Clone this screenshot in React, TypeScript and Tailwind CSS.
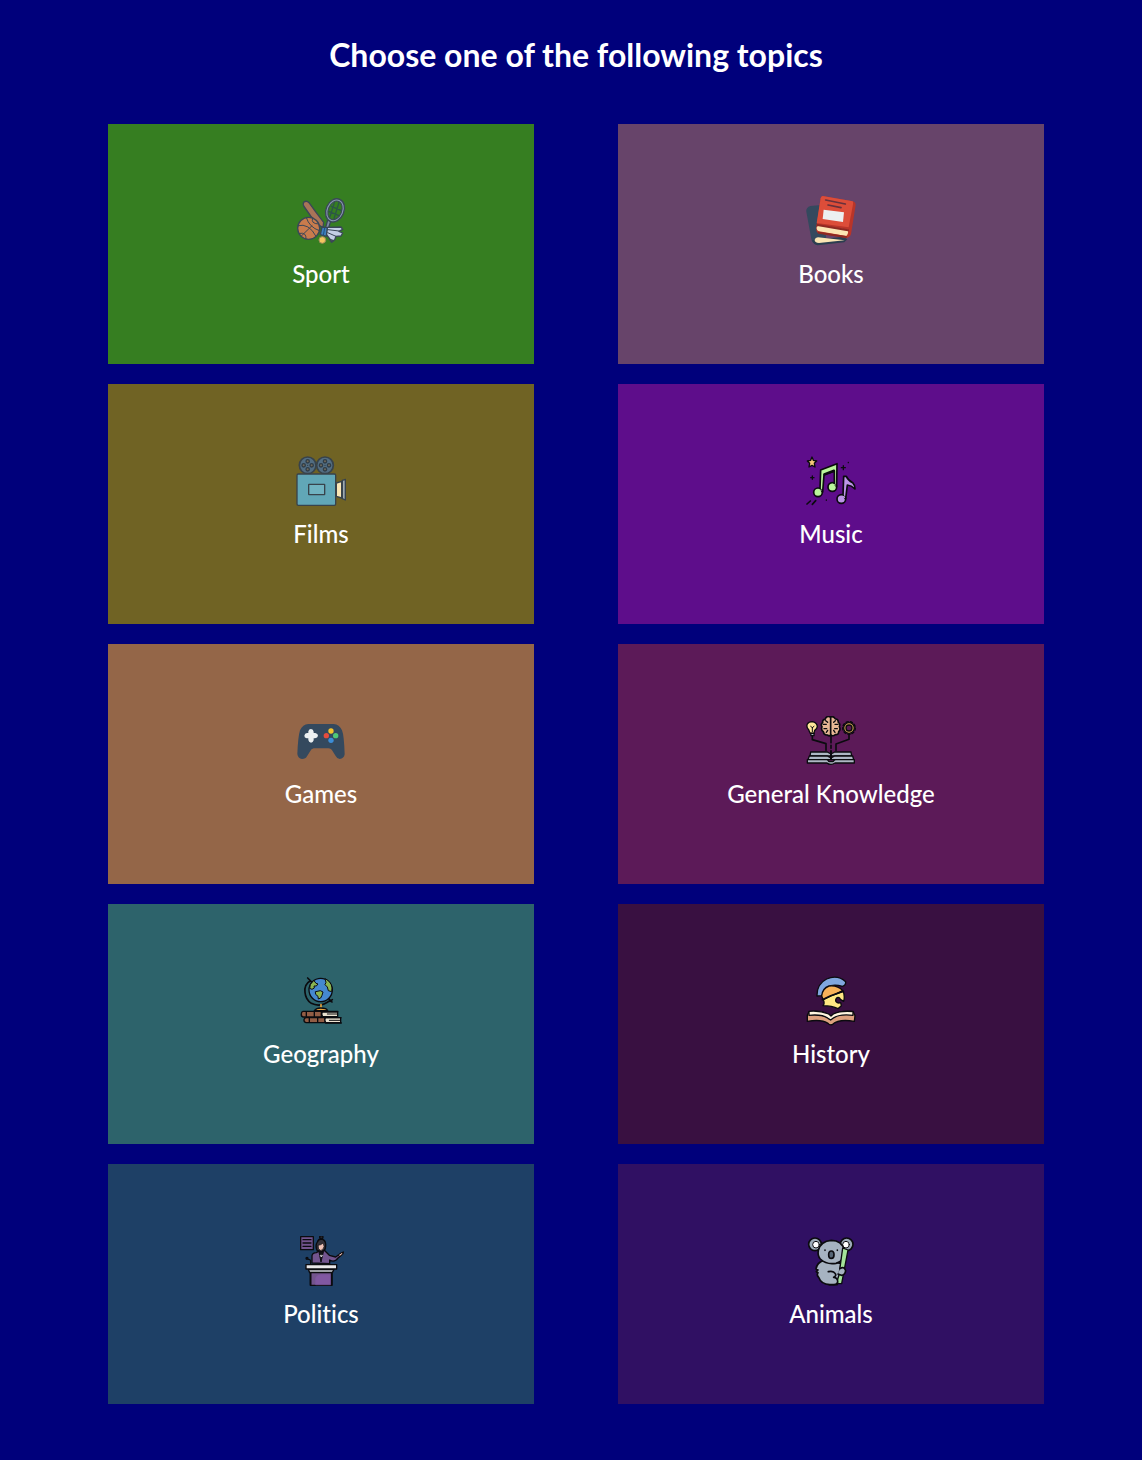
import type { ReactNode } from "react";

const INK = "#0b0b0f";
const SLATE = "#34495e";

function Icon({ children }: { children: ReactNode }) {
  return (
    <svg viewBox="18 18 150 150" className="size-[50px]" aria-hidden="true" strokeLinecap="round" strokeLinejoin="round" fill="none">
      {children}
    </svg>
  );
}

const SportIcon = () => (
  <Icon>
    <g stroke="#3a4757" strokeWidth="4">
      <path d="M41 37 Q49 30 57 38 L76 64 L101 97 L99 113 L84 104 L62 78 L41 48 Q38 42 41 37Z" fill="#a97458" />
      <path d="M113 90 L122 94 L116 113 L107 112 Z" fill="#7d8ca3" />
      <ellipse cx="135" cy="61" rx="27" ry="36" transform="rotate(23 135 61)" fill="#8799b0" />
      <ellipse cx="135" cy="61" rx="20" ry="29" transform="rotate(23 135 61)" fill="#367e21" strokeWidth="3" />
      <path d="M133 38 L120 80 M147 37 L132 86 M124 49 L153 61 M118 65 L147 77" stroke="#2c5548" strokeWidth="4" />
      <circle cx="56" cy="115" r="33" fill="#c97b4c" />
      <path d="M24 107 Q57 98 78 139 M49 83 Q58 112 88 122 M68 84 Q61 101 85 102 M29 130 Q50 126 48 147 M66 107 L34 138" strokeWidth="3" />
      <path d="M112 112 L153 111 L158 118 L147 124 L158 129 L153 138 L138 139 L134 150 L125 154 L108 132 Z" fill="#c3cfe4" />
      <path d="M114 119 L147 123 M113 128 L138 139" strokeWidth="3" />
      <path d="M96 111 L112 113 L109 139 L91 134 Z" fill="#3d80bd" />
      <path d="M104 114 L100 136" stroke="#204f80" strokeWidth="3" />
      <path d="M119 148 L125 157 L131 152 Z" fill="#a97458" />
      <circle cx="97" cy="150" r="10" fill="#f3c65f" stroke="#a18958" strokeWidth="3" />
    </g>
  </Icon>
);

const BooksIcon = () => (
  <Icon>
    <path d="M31 48 L64 45 L80 153 Q54 171 38 157 Q35 153 34 147 L19 65 Q17 53 31 48Z" fill={SLATE} />
    <path d="M36 151 Q40 165 53 166 L133 157 L142 148 L130 140Z" fill="#2c3e50" />
    <path d="M54 142 L134 151 Q101 155 57 159 Q44 158 44 150 Q45 143 54 142Z" fill="#fbe5b3" />
    <path d="M67 18 L158 34 Q167 36 167 45 L153 133 Q149 143 140 144 L56 130 Q47 126 49 112 L62 25 Q62 20 67 18Z" fill="#b93529" />
    <path d="M68 18 L158 34 Q160 36 159 43 L146 112 L50 99 L62 25 Q63 19 68 18Z" fill="#dc4d39" />
    <path d="M57 105 L143 119 Q147 129 139 138 L57 124 Q49 121 50 112Z" fill="#fbe5b3" />
    <path d="M52 105 L144 121 M56 128 L138 141" stroke="#8e2922" strokeWidth="6" />
    <path d="M77 30 L136 42 M84 45 L123 53" stroke="#67313c" strokeWidth="5" />
    <path d="M71 59 L132 67 L129 96 L68 87Z" fill="#ecf0f1" />
  </Icon>
);

function Reel({ x }: { x: number }) {
  return (
    <g transform={`translate(${x} 46)`}>
      <circle r="25" fill="#526d82" stroke="#38434b" strokeWidth="5" />
      <g fill="#71695a" stroke="#303d47" strokeWidth="4">
        <circle cx="0" cy="-12" r="5" />
        <circle cx="12" cy="0" r="5" />
        <circle cx="0" cy="12" r="5" />
        <circle cx="-12" cy="0" r="5" />
      </g>
      <circle r="2" fill="#303d47" />
    </g>
  );
}

const FilmsIcon = () => (
  <Icon>
    <Reel x={53} />
    <Reel x={105} />
    <g stroke="#38434b" strokeWidth="4">
      <rect x="21" y="72" width="116" height="94" rx="4" fill="#61a7b7" />
      <rect x="56" y="103" width="48" height="31" rx="1" fill="#70b3c1" />
      <path d="M139 99 L155 94 V144 L139 139Z" fill="#fae6b4" />
      <path d="M157 91 L166 88 V150 L157 146Z" fill="#9daab2" />
    </g>
  </Icon>
);

const MusicIcon = () => (
  <Icon>
    <g stroke={INK} strokeWidth="5">
      <path d="M36 21 L40 31 L50 33 L43 40 L45 51 L36 46 L27 51 L29 40 L22 33 L32 31Z" fill="#f5c879" strokeWidth="4" />
      <circle cx="54" cy="127" r="13" fill="#baf59b" />
      <circle cx="97" cy="111" r="13" fill="#baf59b" />
      <path d="M62 60 L111 41 L110 109 L103 102 V64 L72 75 L68 126 L60 116Z" fill="#baf59b" />
      <path d="M73 73 L102 62" strokeWidth="7" />
      <circle cx="124" cy="147" r="13" fill="#bd94e8" />
      <path d="M131 79 L139 79 Q144 91 158 98 Q165 105 165 117 Q154 106 142 105 L137 146 L129 137Z" fill="#bd94e8" />
      <path d="M57 119 L63 121 M99 103 L106 105 M127 139 L133 141" stroke="#baf59b" strokeWidth="3" />
      <path d="M127 139 L133 142" stroke="#bd94e8" strokeWidth="4" />
      <path d="M130 47 V59 M124 53 H136 M37 78 V88 M32 83 H42" strokeWidth="4" />
      <path d="M21 162 L31 153 M37 163 L47 152" />
      <path d="M145 37 V38 M79 150 V151" strokeWidth="4" />
    </g>
  </Icon>
);

const GamesIcon = () => (
  <Icon>
    <path d="M55 42 H131 Q148 43 156 61 Q162 75 164 133 Q162 146 149 147 Q141 146 137 138 L128 124 Q124 115 115 115 H71 Q64 116 59 126 L51 139 Q47 147 36 147 Q24 145 22 132 Q24 80 30 61 Q38 43 55 42Z" fill={SLATE} />
    <path d="M63 57 Q70 57 71 65 V69 H76 Q84 71 84 77 Q83 84 75 85 H71 V91 Q69 98 63 98 Q56 97 55 90 V85 H50 Q43 83 43 77 Q44 70 51 69 H55 V64 Q57 57 63 57Z" fill="#ecf0f1" />
    <circle cx="123" cy="63" r="8" fill="#f4c22b" />
    <circle cx="109" cy="77" r="8" fill="#e64c3c" />
    <circle cx="137" cy="77" r="8" fill="#4fc878" />
    <circle cx="123" cy="91" r="8" fill="#3c8dd7" />
  </Icon>
);

const KnowledgeIcon = () => (
  <Icon>
    <g stroke={INK} strokeWidth="4">
      <path d="M30 69 L26 59 Q18 51 22 42 Q26 35 37 35 Q51 38 52 50 Q51 57 44 61 L42 70Z" fill="#ffe79a" />
      <path d="M32 70 H42 V77 H33Z" fill="#aeb8c5" />
      <path d="M37 65 V53 L32 49 M37 53 L42 49" strokeWidth="3" />
      <path d="M91 21 Q80 16 75 28 Q67 28 68 38 Q61 43 66 50 Q62 60 70 65 Q71 76 82 75 Q89 80 92 75 Q99 80 106 74 Q116 75 116 65 Q123 59 118 50 Q122 42 115 37 Q114 26 106 27 Q101 17 91 21Z" fill="#e8b995" strokeWidth="5" />
      <path d="M92 20 V75" strokeWidth="5" />
      <path d="M77 32 L83 37 M70 43 H79 M72 56 H80 M79 67 L83 61 M106 32 L101 37 M114 43 H105 M112 56 H104 M105 67 L101 61" />
      <circle cx="147" cy="54" r="19" stroke={INK} strokeWidth="4" strokeDasharray="7 6" />
      <circle cx="147" cy="54" r="16" fill="#d9ad55" />
      <circle cx="147" cy="54" r="9" fill="#5c1a58" />
      <path d="M37 79 V89 L78 101 V121 M93 76 V98 M93 106 V115 M93 123 V147 M147 76 V88 L108 102 V121" strokeWidth="5" />
      <path d="M32 126 H82 L93 132 L104 126 H153 L155 138 H30Z" fill="#aeb8c5" />
      <path d="M28 138 H82 L93 144 L104 138 H158 L161 149 H24Z" fill="#aeb8c5" />
      <path d="M22 149 H80 Q84 149 87 155 H99 Q103 149 107 149 H163 V159 H105 Q99 163 93 163 Q85 163 81 159 H22Z" fill="#aeb8c5" />
      <path d="M93 124 V148" strokeWidth="6" />
    </g>
  </Icon>
);

const GeographyIcon = () => (
  <Icon>
    <g stroke={INK} strokeWidth="4">
      <path d="M53 24 L65 36 M61 32 Q42 43 45 67 Q47 89 64 100 Q90 113 118 93 M116 86 L126 96 M120 94 L127 89" strokeWidth="5" />
      <circle cx="92" cy="60" r="35" fill="#4588cf" />
      <path d="M72 32 L78 40 L84 42 L79 48 L72 48 L73 54 L66 58 L59 55 L61 44Z M105 27 L108 37 L105 44 L112 51 L115 62 L125 65 Q130 42 112 30Z M77 65 L91 62 L99 66 L96 76 L92 84 L85 87 L84 79 L78 74Z" fill="#8ab451" strokeWidth="3" />
      <path d="M93 104 V112" stroke="#e6a43e" strokeWidth="5" />
      <path d="M73 122 Q79 114 92 114 Q110 114 113 122Z" fill="#e6a43e" />
      <path d="M39 124 H94 V141 H39 Q33 139 34 132 Q34 125 39 124Z" fill="#925d45" />
      <path d="M49 126 V139 M73 125 V140" />
      <path d="M94 124 H144 M97 126 Q92 135 98 140 H143 V126Z" fill="#ece3d1" />
      <path d="M112 132 H141" strokeWidth="3" />
      <path d="M48 143 H105 V158 H48 Q41 156 42 149 Q43 144 48 143Z" fill="#925d45" />
      <path d="M58 144 V157 M83 144 V157" />
      <path d="M106 143 H152 V158 H107 Q102 151 106 143Z" fill="#ece3d1" />
      <path d="M118 151 H150" strokeWidth="3" />
      <path d="M107 143 H153 M107 159 H154" />
    </g>
  </Icon>
);

const HistoryIcon = () => (
  <Icon>
    <g stroke={INK} strokeWidth="4">
      <path d="M51 78 Q50 42 80 27 Q112 13 137 35 Q138 46 127 49 Q99 40 82 52 L65 77Z" fill="#80a7df" />
      <path d="M65 78 Q67 55 87 48 Q113 45 128 62 L70 90Z" fill="#f7b259" />
      <path d="M70 89 L93 78 L130 64 Q135 82 131 94 L121 88 Q118 80 111 83 Q105 88 108 95 Q113 101 122 98 L124 107 L114 116 Q96 107 69 107 Q75 100 70 89Z" fill="#ffe883" />
      <path d="M67 89 L92 77 L130 64" strokeWidth="5" />
      <path d="M27 125 Q67 118 93 139 Q117 120 159 124 L165 137 L163 154 Q116 146 98 163 Q90 167 84 160 Q65 147 22 154 V136Z" fill="#dda17d" />
      <path d="M27 124 Q59 121 86 132 L93 138 L100 132 Q119 122 159 125 V136 Q118 131 99 145 L92 150 L84 145 Q66 132 27 136Z" fill="#fff6df" />
    </g>
  </Icon>
);

const PoliticsIcon = () => (
  <Icon>
    <g stroke={INK} strokeWidth="4">
      <path d="M32 20 H70 V59 H32Z" fill="#73548e" />
      <path d="M39 29 H63 M39 39 H63 M39 49 H63" />
      <path d="M66 99 V77 Q67 69 79 68 L90 61 H103 L118 76 L137 81 L154 69 L160 66 L158 72 L145 83 Q134 99 119 90 V101Z" fill="#73548e" />
      <path d="M87 66 L93 96 L100 66Z" fill="#151519" strokeWidth="3" />
      <path d="M91 77 L94 81 L97 77Z" fill="#eee8ef" stroke="#eee8ef" strokeWidth="2" />
      <path d="M81 61 Q75 47 82 36 Q85 27 94 27 Q106 29 107 42 Q108 57 101 63Z" fill="#343139" />
      <circle cx="94" cy="22" r="5" fill="#252329" />
      <path d="M85 46 Q94 45 99 39 Q106 50 98 59 Q92 65 86 57Z" fill="#efc2b7" strokeWidth="2" />
      <path d="M146 74 L155 68 L160 67 L157 73 L150 79Z" fill="#efc2b7" strokeWidth="3" />
      <path d="M55 88 Q62 87 62 96 V104" />
      <circle cx="51" cy="85" r="3" fill={INK} />
      <path d="M61 127 H126 V166 H61Z" fill="#73548e" />
      <path d="M77 163 V144 Q81 134 94 134 H122 V163Z" fill="#8158a2" stroke="#8158a2" strokeWidth="2" />
      <path d="M62 127 V165 M125 127 V165" strokeWidth="5" />
      <path d="M55 118 H132 L127 128 H59Z" fill="#9b9da4" />
      <rect x="48" y="104" width="92" height="13" fill="#e9e7e8" />
    </g>
  </Icon>
);

const AnimalsIcon = () => (
  <Icon>
    <g stroke={INK} strokeWidth="5">
      <circle cx="45" cy="43" r="19" fill="#9dabb9" />
      <circle cx="140" cy="43" r="19" fill="#9dabb9" />
      <circle cx="48" cy="44" r="10" fill="#fff" strokeWidth="3" />
      <circle cx="138" cy="44" r="10" fill="#fff" strokeWidth="3" />
      <path d="M71 91 Q51 97 48 117 L54 120 L49 125 L54 128 Q49 135 56 142 Q63 163 89 164 H111 Q122 151 118 135 L123 100Z" fill="#a6b3c1" />
      <path d="M55 61 Q62 33 94 31 Q125 31 134 61 Q136 91 108 100 Q80 105 61 87 Q52 77 55 61Z" fill="#a6b3c1" />
      <path d="M128 54 L144 60 L125 161 L109 160 L117 135Z" fill="#a4e49a" strokeWidth="4" />
      <path d="M85 125 Q100 121 106 131 Q110 137 101 142 Q114 143 113 157 Q108 165 99 164 H88" fill="#a6b3c1" />
      <path d="M120 116 Q132 108 137 122 Q135 136 124 136 L114 132" fill="#a6b3c1" />
      <ellipse cx="94" cy="74" rx="8" ry="11" fill="#556575" />
      <path d="M75 60 V61 M112 60 V61" />
    </g>
  </Icon>
);

const topics = [
  { name: "Sport", color: "bg-[#367e21]", Art: SportIcon },
  { name: "Books", color: "bg-[#67446a]", Art: BooksIcon },
  { name: "Films", color: "bg-[#706324]", Art: FilmsIcon },
  { name: "Music", color: "bg-[#5e0d8b]", Art: MusicIcon },
  { name: "Games", color: "bg-[#946648]", Art: GamesIcon },
  { name: "General Knowledge", color: "bg-[#5c1a58]", Art: KnowledgeIcon },
  { name: "Geography", color: "bg-[#2d636b]", Art: GeographyIcon },
  { name: "History", color: "bg-[#391041]", Art: HistoryIcon },
  { name: "Politics", color: "bg-[#1e4066]", Art: PoliticsIcon },
  { name: "Animals", color: "bg-[#301063]", Art: AnimalsIcon },
];

export default function App() {
  return (
    <main className="min-h-screen bg-[#00007b] pt-9 pr-[98px] pb-14 pl-[108px] font-['Lato',sans-serif] text-white [font-variant-ligatures:none]">
      <h1 className="text-center text-[32px] leading-[38px] font-bold">Choose one of the following topics</h1>
      <div className="mt-[50px] grid grid-cols-2 gap-x-[84px] gap-y-5">
        {topics.map(({ name, color, Art }) => (
          <button key={name} type="button" className={`flex min-h-60 cursor-pointer flex-col items-center justify-center gap-3 pb-0.5 ${color}`}>
            <Art />
            <span className="text-2xl leading-8 font-medium">{name}</span>
          </button>
        ))}
      </div>
    </main>
  );
}
